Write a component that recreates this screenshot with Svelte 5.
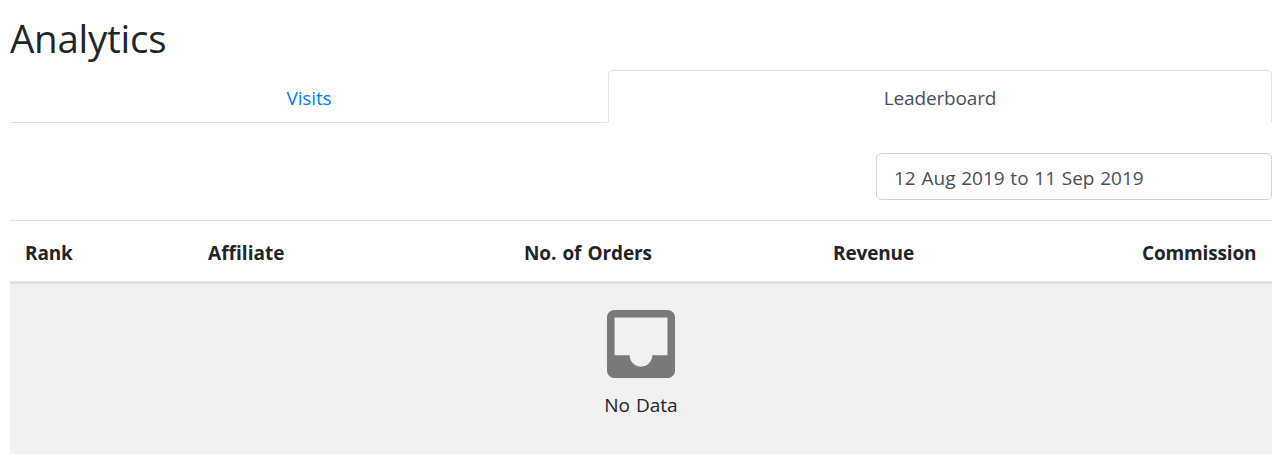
<script>
  const tabs = ['Visits', 'Leaderboard'];
  const columns = ['Rank', 'Affiliate', 'No. of Orders', 'Revenue', 'Commission'];
  let active = $state('Leaderboard');
</script>

<main>
  <h1>Analytics</h1>
  <nav>
    {#each tabs as tab}
      <button class:active={active === tab} onclick={() => (active = tab)}>{tab}</button>
    {/each}
  </nav>
  <div class="filter">
    <div class="date">12 Aug 2019 to 11 Sep 2019</div>
  </div>
  <section>
    <header>
      {#each columns as column}
        <span>{column}</span>
      {/each}
    </header>
    <div class="empty">
      <svg class="inbox" viewBox="3 3 18 18"><path d="M19 3H5c-1.1 0-2 .9-2 2v14c0 1.1.9 2 2 2h14c1.1 0 2-.9 2-2V5c0-1.1-.9-2-2-2zm0 12h-4c0 1.66-1.34 3-3 3s-3-1.34-3-3H5V5h14v10z" /></svg>
      <p>No Data</p>
    </div>
  </section>
</main>

<style>
  :global(body) { background: #fff; }
  main { box-sizing: border-box; width: 1277px; height: 461px; padding: 13px 5px 0 10px; font: 19px/30px 'Open Sans', 'Noto Sans', sans-serif; color: #212529; }
  h1 { margin: 0; height: 57px; font-size: 38.5px; line-height: 50px; font-weight: 400; letter-spacing: -0.25px; }
  nav { display: grid; grid-template-columns: 598px 664px; height: 53px; }
  button { display: flex; justify-content: center; align-items: flex-start; padding: 12px 0 0; border: 1px solid transparent; border-bottom-color: #dee2e6; background: #fff; color: #007bff; font: inherit; letter-spacing: -0.15px; }
  button.active { border-color: #dee2e6 #dee2e6 #fff; border-radius: 5px 5px 0 0; color: #495057; }
  .filter { display: flex; justify-content: flex-end; padding: 30px 0 20px; }
  .date { box-sizing: border-box; width: 396px; height: 47px; border: 1px solid #ced4da; border-radius: 5px; padding: 9px 17px; color: #495057; word-spacing: 0.8px; }
  header { box-sizing: border-box; display: grid; grid-template-columns: 183px 316px 309px 309px auto; height: 64px; padding: 17px 0 0 15px; border-top: 1px solid #dee2e6; border-bottom: 3px solid #dee2e6; font-weight: 700; letter-spacing: -0.15px; word-spacing: 1.5px; white-space: nowrap; }
  header span:nth-child(2) { letter-spacing: 0.05px; }
  .empty { box-sizing: border-box; height: 170px; background: #f1f1f1; display: flex; flex-direction: column; align-items: center; padding-top: 26px; }
  .inbox { display: block; width: 68px; height: 68px; margin-bottom: 12px; fill: #797979; }
  p { margin: 0; word-spacing: 1px; }
</style>
